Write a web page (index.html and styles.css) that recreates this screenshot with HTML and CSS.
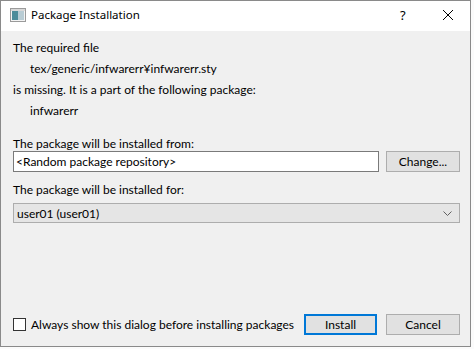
FILE: index.html
```html
<!DOCTYPE html>
<html lang="en">
<head>
  <meta charset="UTF-8">
  <title>Package Installation</title>
  <link rel="stylesheet" href="styles.css">
</head>
<body>

  <div class="dialog">
    <div class="titlebar">
      <svg class="app-icon" width="16" height="14" viewBox="0 0 16 14">
        <rect x="0.5" y="0.5" width="15" height="13" fill="#f4f4f4" stroke="#9a9a9a"/>
        <rect x="2" y="3" width="6" height="9" fill="#4d8c9a"/>
        <rect x="8" y="3" width="6" height="9" fill="#b8ccd4"/>
        <rect x="1" y="1" width="14" height="2" fill="#d8d8d8"/>
      </svg>
      <span class="title">Package Installation</span>
      <span class="title-help">?</span>
      <svg class="title-close" width="12" height="12" viewBox="0 0 12 12">
        <path d="M1 1 L11 11 M11 1 L1 11" stroke="#000" stroke-width="1"/>
      </svg>
    </div>

    <div class="content">
      <div class="line">The required file</div>
      <div class="line indent">tex/generic/infwarerr¥infwarerr.sty</div>
      <div class="line">is missing. It is a part of the following package:</div>
      <div class="line indent">infwarerr</div>

      <div class="label from">The package will be installed from:</div>
      <div class="row">
        <div class="textbox">&lt;Random package repository&gt;</div>
        <button class="btn">Change...</button>
      </div>

      <div class="label for">The package will be installed for:</div>
      <div class="combo">
        <span>user01 (user01)</span>
        <svg width="9" height="5" viewBox="0 0 9 5">
          <path d="M0.5 0.5 L4.5 4.5 L8.5 0.5" fill="none" stroke="#606060"/>
        </svg>
      </div>

      <div class="footer">
        <label class="check">
          <span class="box"></span>
          Always show this dialog before installing packages
        </label>
        <button class="btn default">Install</button>
        <button class="btn">Cancel</button>
      </div>
    </div>
  </div>

</body>
</html>
```

FILE: styles.css
```css
body {
  margin: 0;
  padding: 0;
  background-color: #fbfbfb;
  font-family: Lato, "Noto Sans CJK JP", sans-serif;
  font-size: 12px;
  color: #000;
}
.dialog {
  width: 469px;
  height: 345px;
  border: 1px solid #8a8a8a;
  background-color: #f0f0f0;
  display: flex;
  flex-direction: column;
}
.titlebar {
  height: 27px;
  padding-bottom: 3px;
  background-color: #fff;
  display: flex;
  align-items: center;
  flex-shrink: 0;
}
.app-icon {
  margin-left: 9px;
  margin-right: 5px;
}
.title {
  font-family: "Noto Sans", sans-serif;
  font-size: 11.5px;
  flex: 1;
}
.title-help {
  font-family: "Noto Sans", sans-serif;
  font-size: 13px;
  width: 10px;
  margin-right: 32px;
}
.title-close {
  margin-right: 16px;
}
.content {
  flex: 1;
  display: flex;
  flex-direction: column;
  padding: 0 10px 11px 12px;
}
.line {
  height: 21px;
  line-height: 21px;
  white-space: nowrap;
}
.line:first-child {
  margin-top: 6px;
}
.indent {
  padding-left: 17px;
}
.label {
  height: 14px;
  line-height: 14px;
}
.label.from {
  margin-top: 16px;
}
.label.for {
  margin-top: 11px;
  margin-bottom: 6px;
}
.row {
  display: flex;
  gap: 7px;
}
.textbox {
  flex: 1;
  height: 19px;
  line-height: 19px;
  border: 1px solid #7a7a7a;
  background-color: #fff;
  padding-left: 2px;
}
.btn {
  width: 74px;
  height: 21px;
  padding: 0;
  border: 1px solid #adadad;
  background-color: #e1e1e1;
  font-family: inherit;
  font-size: 12px;
  color: #000;
}
.btn.default {
  width: 73px;
  border: 2px solid #0078d7;
}
.combo {
  height: 18px;
  border: 1px solid #adadad;
  background-color: #e5e5e5;
  display: flex;
  align-items: center;
  justify-content: space-between;
  padding: 0 7px 0 3px;
}
.footer {
  margin-top: auto;
  display: flex;
  align-items: center;
  gap: 9px;
}
.check {
  flex: 1;
  display: flex;
  align-items: center;
  gap: 5px;
  white-space: nowrap;
}
.box {
  width: 11px;
  height: 11px;
  border: 1px solid #333;
  background-color: #fff;
}
```
